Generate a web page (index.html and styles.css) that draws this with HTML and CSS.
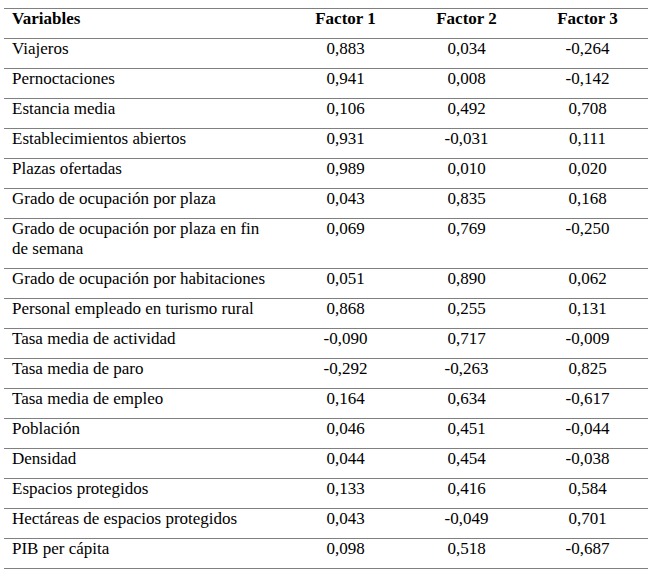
FILE: index.html
```html
<!DOCTYPE html>
<html>
<head>
<meta charset="utf-8">
<link rel="stylesheet" href="styles.css">
</head>
<body>
<table class="tbl">
  <tr><th class="v">Variables</th><th class="n">Factor 1</th><th class="n">Factor 2</th><th class="n">Factor 3</th></tr>
  <tr><td class="v">Viajeros</td><td>0,883</td><td>0,034</td><td>-0,264</td></tr>
  <tr><td class="v">Pernoctaciones</td><td>0,941</td><td>0,008</td><td>-0,142</td></tr>
  <tr><td class="v">Estancia media</td><td>0,106</td><td>0,492</td><td>0,708</td></tr>
  <tr><td class="v">Establecimientos abiertos</td><td>0,931</td><td>-0,031</td><td>0,111</td></tr>
  <tr><td class="v">Plazas ofertadas</td><td>0,989</td><td>0,010</td><td>0,020</td></tr>
  <tr><td class="v">Grado de ocupación por plaza</td><td>0,043</td><td>0,835</td><td>0,168</td></tr>
  <tr><td class="v">Grado de ocupación por plaza en fin<br>de semana</td><td>0,069</td><td>0,769</td><td>-0,250</td></tr>
  <tr><td class="v">Grado de ocupación por habitaciones</td><td>0,051</td><td>0,890</td><td>0,062</td></tr>
  <tr><td class="v">Personal empleado en turismo rural</td><td>0,868</td><td>0,255</td><td>0,131</td></tr>
  <tr><td class="v">Tasa media de actividad</td><td>-0,090</td><td>0,717</td><td>-0,009</td></tr>
  <tr><td class="v">Tasa media de paro</td><td>-0,292</td><td>-0,263</td><td>0,825</td></tr>
  <tr><td class="v">Tasa media de empleo</td><td>0,164</td><td>0,634</td><td>-0,617</td></tr>
  <tr><td class="v">Población</td><td>0,046</td><td>0,451</td><td>-0,044</td></tr>
  <tr><td class="v">Densidad</td><td>0,044</td><td>0,454</td><td>-0,038</td></tr>
  <tr><td class="v">Espacios protegidos</td><td>0,133</td><td>0,416</td><td>0,584</td></tr>
  <tr><td class="v">Hectáreas de espacios protegidos</td><td>0,043</td><td>-0,049</td><td>0,701</td></tr>
  <tr><td class="v">PIB per cápita</td><td>0,098</td><td>0,518</td><td>-0,687</td></tr>
</table>
</body>
</html>
```

FILE: styles.css
```css
p, table, td, th { font-family: "Liberation Serif", serif; }
body {
  margin: 0;
  padding: 8px 3px 0 4px;
  font: 17px "Liberation Serif", serif;
}
.tbl {
  width: 644px;
  border-collapse: collapse;
  table-layout: fixed;
}
.tbl td, .tbl th {
  font-size: 17px;
  border-top: 1px solid #808080;
  border-bottom: 1px solid #808080;
  padding: 0 4px 9px 4px;
  line-height: 20px;
  vertical-align: top;
  text-align: center;
  white-space: nowrap;
}
.tbl th.v { width: 273px; }
.tbl th.n { width: 113px; }
.tbl .v {
  text-align: left;
  padding-left: 8px;
  padding-right: 0;
}
```
